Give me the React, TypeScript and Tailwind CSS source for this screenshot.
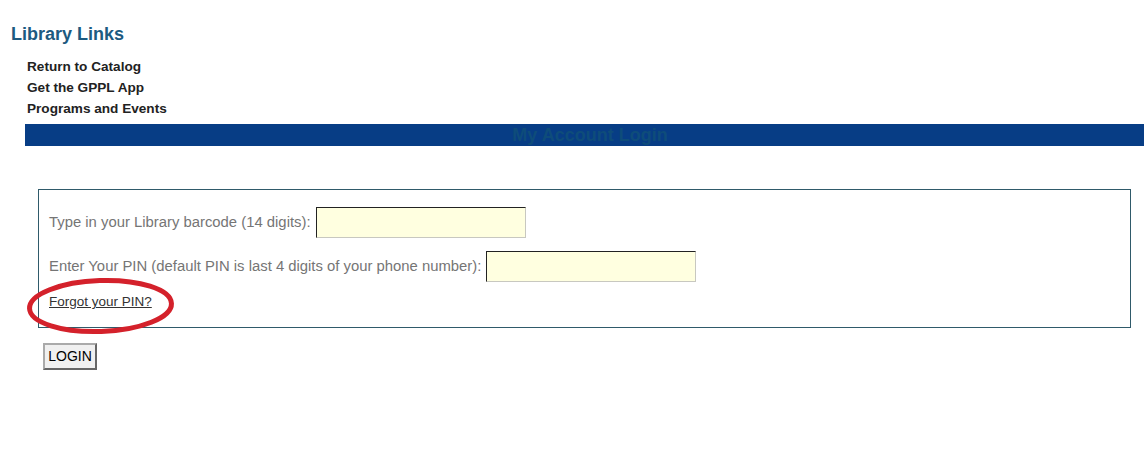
import React from "react";

export default function App() {
  return (
    <div className="relative w-[1144px] h-[459px] bg-white font-['Liberation_Sans',Arial,sans-serif] overflow-hidden">
      <div className="pt-[24px] pl-[11px] text-[18px] leading-[20px] font-bold text-[#1d5a80]">Library Links</div>
      <ul className="mt-[12px] pl-[27px] text-[13.6px] leading-[21px] font-bold text-[#222]">
        <li>Return to Catalog</li>
        <li>Get the GPPL App</li>
        <li>Programs and Events</li>
      </ul>
      <div className="ml-[25px] mt-[5px] h-[22px] bg-[#073d85] flex items-center justify-center pl-[11px]">
        <span className="text-[18px] font-bold text-[#0e4c7a] leading-[22px]">My Account Login</span>
      </div>
      <div className="ml-[38px] mr-[13px] mt-[43px] h-[139px] border border-[#2f5a6a] pl-[10px] pt-[17px]">
        <div className="flex items-center">
          <label className="text-[14.85px] text-[#757575] mr-[5px]">Type in your Library barcode (14 digits):</label>
          <input className="w-[210px] h-[31px] bg-[#ffffe0] border border-t-[#222] border-l-[#222] border-b-[#c8c8c0] border-r-[#c8c8c0] outline-none" />
        </div>
        <div className="flex items-center mt-[13px]">
          <label className="text-[14.85px] text-[#757575] mr-[5px]">Enter Your PIN (default PIN is last 4 digits of your phone number):</label>
          <input className="w-[210px] h-[31px] bg-[#ffffe0] border border-t-[#222] border-l-[#222] border-b-[#c8c8c0] border-r-[#c8c8c0] outline-none" />
        </div>
        <div className="mt-[12px] text-[13.5px] leading-[16px] text-[#333] underline">Forgot your PIN?</div>
      </div>
      <button className="ml-[43px] mt-[15px] w-[54px] h-[27px] bg-[#f0f0f0] border-2 border-t-[#aaa] border-l-[#aaa] border-b-[#666] border-r-[#666] text-[14px] text-black flex items-center justify-center">
        LOGIN
      </button>
      <svg className="absolute left-[22px] top-[272px]" width="160" height="68" viewBox="0 0 160 68">
        <ellipse cx="78.5" cy="34" rx="71" ry="25.5" fill="none" stroke="#d4212b" strokeWidth="5" transform="rotate(-2 78.5 34)" />
      </svg>
    </div>
  );
}
